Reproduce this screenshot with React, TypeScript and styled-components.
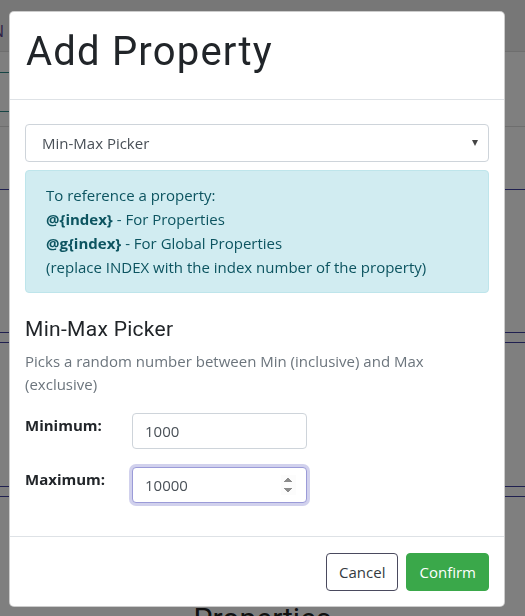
import React from "react";
import styled, { createGlobalStyle } from "styled-components";

const GlobalStyle = createGlobalStyle`
  html, body {
    margin: 0;
    padding: 0;
    background: #ffffff;
    font-family: "Open Sans", "Liberation Sans", sans-serif;
  }
  * {
    box-sizing: border-box;
  }
`;

const Page = styled.div`
  width: 525px;
  height: 616px;
  overflow: hidden;
`;

const NavBar = styled.div`
  height: 52px;
  background: #efefef;
  border-bottom: 1px solid #dcdcdc;
  display: flex;
  align-items: center;
  padding-top: 10px;
`;

const Brand = styled.span`
  margin-left: -8px;
  color: #5a3f8c;
  font-size: 16px;
`;

const SubNav = styled.div`
  height: 75px;
  border-bottom: 1px solid #dcdcdc;
  display: flex;
  flex-direction: column;
  gap: 38px;
  padding-top: 20px;
`;

const TealLine = styled.div`
  width: 10px;
  height: 1px;
  background: #2c8a8a;
`;

const Rule = styled.div<{ $top: number }>`
  margin-top: ${(p) => p.$top}px;
  height: 1px;
  background: #4040a0;
`;

const BackTitle = styled.div`
  margin-top: 104px;
  text-align: center;
  font-family: Roboto, sans-serif;
  font-size: 30px;
  color: #222;
`;

const Overlay = styled.div`
  position: fixed;
  inset: 0;
  background: rgba(0, 0, 0, 0.5);
`;

const Dialog = styled.div`
  position: fixed;
  top: 11px;
  left: 9px;
  width: 496px;
  background: #fff;
  border: 1px solid rgba(0, 0, 0, 0.2);
  border-radius: 5px;
  display: flex;
  flex-direction: column;
`;

const Header = styled.div`
  padding: 16px 16px 23px 16px;
  border-bottom: 1px solid #dee2e6;
`;

const Title = styled.h1`
  margin: 0;
  font-family: Roboto, sans-serif;
  font-weight: 400;
  font-size: 40px;
  line-height: 48px;
  letter-spacing: 1.2px;
  color: #212529;
`;

const Body = styled.div`
  padding: 24px 15px 33px 15px;
  display: flex;
  flex-direction: column;
`;

const SelectBox = styled.div`
  height: 38px;
  border: 1px solid #ced4da;
  border-radius: 4px;
  display: flex;
  align-items: center;
  justify-content: space-between;
  padding: 0 10px 0 16px;
  font-size: 15px;
  color: #495057;
`;

const Caret = styled.span`
  width: 0;
  height: 0;
  border-left: 3px solid transparent;
  border-right: 3px solid transparent;
  border-top: 6px solid #444;
`;

const Alert = styled.div`
  margin-top: 8px;
  padding: 12px 20px 13px;
  background: #d1ecf1;
  border: 1px solid #bee5eb;
  border-radius: 4px;
  color: #0c5460;
  font-size: 15px;
  line-height: 24px;
`;

const Code = styled.b`
  font-weight: 700;
`;

const Heading = styled.h4`
  margin: 24px 0 0 0;
  font-family: Roboto, sans-serif;
  font-weight: 400;
  font-size: 21px;
  line-height: 25px;
  letter-spacing: 0.3px;
  color: #212529;
`;

const Description = styled.p`
  margin: 8px 0 0 0;
  font-size: 15px;
  line-height: 23px;
  color: #6c757d;
`;

const Fields = styled.div`
  margin-top: 17px;
  display: grid;
  grid-template-columns: 107px 175px;
  row-gap: 18px;
`;

const Label = styled.label`
  font-weight: 700;
  font-size: 15px;
  line-height: 24px;
  color: #212529;
`;

const Input = styled.input<{ $focused?: boolean }>`
  height: 36px;
  width: 175px;
  padding: 0 10px 0 12px;
  font-family: "Open Sans", "Liberation Sans", sans-serif;
  font-size: 15px;
  color: #495057;
  border: 1px solid ${(p) => (p.$focused ? "#9b9bd8" : "#ced4da")};
  border-radius: 4px;
  outline: none;
  box-shadow: ${(p) =>
    p.$focused ? "0 0 0 3px rgba(140, 140, 210, 0.4)" : "none"};
  caret-color: #111;
  appearance: textfield;
  &::-webkit-inner-spin-button {
    opacity: ${(p) => (p.$focused ? 1 : 0)};
  }
`;

const Footer = styled.div`
  border-top: 1px solid #dee2e6;
  padding: 16px 15px 15px;
  display: flex;
  justify-content: flex-end;
  gap: 8px;
`;

const Button = styled.button<{ $primary?: boolean }>`
  height: 38px;
  padding: 0 12px;
  border-radius: 4px;
  font-family: "Open Sans", "Liberation Sans", sans-serif;
  font-size: 15px;
  cursor: pointer;
  border: 1px solid ${(p) => (p.$primary ? "#3aa84a" : "#4a4a5e")};
  background: ${(p) => (p.$primary ? "#3aa84a" : "#fff")};
  color: ${(p) => (p.$primary ? "#fff" : "#343a40")};
`;

export default function App() {
  return (
    <>
      <GlobalStyle />
      <Page>
        <NavBar>
          <Brand>N</Brand>
        </NavBar>
        <SubNav>
          <TealLine />
          <TealLine />
        </SubNav>
        <Rule $top={62} />
        <Rule $top={142} />
        <Rule $top={9} />
        <Rule $top={143} />
        <Rule $top={9} />
        <BackTitle>Properties</BackTitle>
      </Page>
      <Overlay />
      <Dialog>
        <Header>
          <Title>Add Property</Title>
        </Header>
        <Body>
          <SelectBox>
            <span>Min-Max Picker</span>
            <Caret />
          </SelectBox>
          <Alert>
            To reference a property:
            <br />
            <Code>@{"{index}"}</Code> - For Properties
            <br />
            <Code>@g{"{index}"}</Code> - For Global Properties
            <br />
            (replace INDEX with the index number of the property)
          </Alert>
          <Heading>Min-Max Picker</Heading>
          <Description>
            Picks a random number between Min (inclusive) and Max (exclusive)
          </Description>
          <Fields>
            <Label>Minimum:</Label>
            <Input type="number" defaultValue={1000} />
            <Label>Maximum:</Label>
            <Input type="number" defaultValue={10000} $focused autoFocus />
          </Fields>
        </Body>
        <Footer>
          <Button>Cancel</Button>
          <Button $primary>Confirm</Button>
        </Footer>
      </Dialog>
    </>
  );
}
